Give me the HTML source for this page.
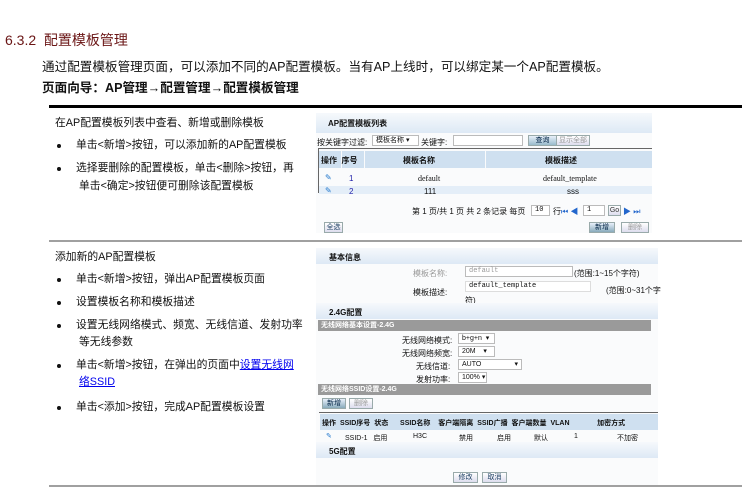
<!DOCTYPE html>
<html><head><meta charset="utf-8"><style>
*{margin:0;padding:0;box-sizing:border-box}
body{width:742px;height:492px;background:#fff;position:relative;overflow:hidden;font-family:"Liberation Sans","Noto Sans CJK SC",sans-serif;color:#111}
.a{position:absolute;white-space:nowrap}
.t{font-size:10.8px;line-height:13px}
.dot{position:absolute;width:4px;height:4px;border-radius:50%;background:#111}
.s{font-size:8px;font-family:"Liberation Sans","Noto Sans CJK SC",sans-serif}
.band{position:absolute;background:linear-gradient(#f6f9fc,#dde9f5)}
.btn{position:absolute;border:1px solid #9aa;background:linear-gradient(#fff,#dde);font-size:7px;text-align:center;line-height:9px;height:11px;color:#246}
.inp{position:absolute;border:1px solid #bbb;background:#fff;height:11px;font-size:7px;line-height:9px;padding-left:3px;font-family:"Liberation Mono",monospace}
.gray{position:absolute;background:#9a9a9a;color:#fff;font-size:7px;font-weight:bold;line-height:11px;padding-left:3px;height:11px}
</style></head><body>
<div class="a" style="left:5px;top:30px;font-size:14px;color:#6a1515">6.3.2&nbsp; 配置模板管理</div>
<div class="a" style="left:42px;top:56px;font-size:12.6px">通过配置模板管理页面，可以添加不同的AP配置模板。当有AP上线时，可以绑定某一个AP配置模板。</div>
<div class="a" style="left:42px;top:77px;font-size:12.6px;font-weight:bold">页面向导：AP管理→配置管理→配置模板管理</div>
<div class="a" style="left:49px;top:105px;width:693px;height:3px;background:#000"></div>
<div class="a" style="left:49px;top:240px;width:693px;height:2px;background:#a0a0a0"></div>
<div class="a" style="left:49px;top:485px;width:693px;height:2px;background:#a0a0a0"></div>

<div class="a t" style="left:55px;top:117px">在AP配置模板列表中查看、新增或删除模板</div>
<div class="dot" style="left:57px;top:144px"></div><div class="a t" style="left:76px;top:139px">单击&lt;新增&gt;按钮，可以添加新的AP配置模板</div>
<div class="dot" style="left:57px;top:167px"></div><div class="a t" style="left:76px;top:162px">选择要删除的配置模板，单击&lt;删除&gt;按钮，再</div>
<div class="a t" style="left:79px;top:180px">单击&lt;确定&gt;按钮便可删除该配置模板</div>

<div class="a t" style="left:55px;top:251px">添加新的AP配置模板</div>
<div class="dot" style="left:57px;top:278px"></div><div class="a t" style="left:76px;top:273px">单击&lt;新增&gt;按钮，弹出AP配置模板页面</div>
<div class="dot" style="left:57px;top:301px"></div><div class="a t" style="left:76px;top:296px">设置模板名称和模板描述</div>
<div class="dot" style="left:57px;top:324px"></div><div class="a t" style="left:76px;top:319px">设置无线网络模式、频宽、无线信道、发射功率</div>
<div class="a t" style="left:79px;top:336px">等无线参数</div>
<div class="dot" style="left:57px;top:364px"></div><div class="a t" style="left:76px;top:359px">单击&lt;新增&gt;按钮，在弹出的页面中<span style="color:#00e;text-decoration:underline">设置无线网</span></div>
<div class="a t" style="left:79px;top:376px;color:#00e;text-decoration:underline">络SSID</div>
<div class="dot" style="left:57px;top:406px"></div><div class="a t" style="left:76px;top:401px">单击&lt;添加&gt;按钮，完成AP配置模板设置</div>

<!-- shot 1 -->
<div class="band" style="left:316px;top:113px;width:336px;height:20px"></div>
<div class="a s" style="left:328px;top:118px;font-weight:bold">AP配置模板列表</div>
<div class="a" style="left:316px;top:133px;width:336px;height:100px;background:#fafbfc"></div>
<div class="a s" style="left:317px;top:137px">按关键字过滤:</div>
<div class="inp" style="left:372px;top:135px;width:47px;font-family:inherit">模板名称 ▾</div>
<div class="a s" style="left:421px;top:137px">关键字:</div>
<div class="inp" style="left:453px;top:135px;width:70px"></div>
<div class="btn" style="left:528px;top:135px;width:29px;background:linear-gradient(#e8f0fa,#9bc);color:#024">查询</div>
<div class="btn" style="left:556px;top:135px;width:34px;color:#999">显示全部</div>
<div class="a" style="left:318px;top:148px;width:334px;height:1px;background:#666"></div>
<div class="a" style="left:318px;top:149px;width:1px;height:44px;background:#666"></div>
<div class="a" style="left:319px;top:151px;width:22px;height:17px;background:#cfe0f0"></div>
<div class="a" style="left:342px;top:151px;width:22px;height:17px;background:#cfe0f0"></div>
<div class="a" style="left:365px;top:151px;width:120px;height:17px;background:#cfe0f0"></div>
<div class="a" style="left:486px;top:151px;width:166px;height:17px;background:#cfe0f0"></div>
<div class="a s" style="left:321px;top:155px;font-weight:bold">操作&nbsp; 序号</div>
<div class="a s" style="left:403px;top:155px;font-weight:bold">模板名称</div>
<div class="a s" style="left:545px;top:155px;font-weight:bold">模板描述</div>
<div class="a" style="left:319px;top:186px;width:333px;height:8px;background:#e4eef8"></div>
<div class="a s" style="left:325px;top:173px;color:#27c">✎</div><div class="a s" style="left:349px;top:174px;color:#22a">1</div>
<div class="a s" style="left:418px;top:174px;font-family:'Liberation Serif',serif">default</div>
<div class="a s" style="left:543px;top:174px;font-family:'Liberation Serif',serif">default_template</div>
<div class="a s" style="left:325px;top:186px;color:#27c">✎</div><div class="a s" style="left:349px;top:187px;color:#22a">2</div>
<div class="a s" style="left:424px;top:187px">111</div><div class="a s" style="left:567px;top:187px">sss</div>
<div class="a s" style="left:412px;top:206px">第 1 页/共 1 页 共 2 条记录 每页</div>
<div class="inp" style="left:531px;top:205px;width:19px">10</div>
<div class="a s" style="left:553px;top:206px">行<span style="color:#26c">⏮ ◀</span></div>
<div class="inp" style="left:583px;top:205px;width:22px">1</div>
<div class="btn" style="left:608px;top:205px;width:13px;color:#333">Go</div>
<div class="a s" style="left:623px;top:206px;color:#26c">▶ ⏭</div>
<div class="btn" style="left:324px;top:222px;width:19px">全选</div>
<div class="btn" style="left:589px;top:222px;width:26px;background:linear-gradient(#e8f0fa,#8ab);color:#024">新增</div>
<div class="btn" style="left:621px;top:222px;width:28px;color:#999">删除</div>

<!-- shot 2 -->
<div class="a" style="left:316px;top:248px;width:342px;height:237px;background:#fafbfc"></div>
<div class="band" style="left:316px;top:248px;width:342px;height:16px"></div>
<div class="a s" style="left:329px;top:252px;font-weight:bold">基本信息</div>
<div class="a s" style="left:413px;top:268px;color:#999">模板名称:</div>
<div class="inp" style="left:465px;top:266px;width:108px;color:#999">default</div>
<div class="a s" style="left:574px;top:268px">(范围:1~15个字符)</div>
<div class="a s" style="left:413px;top:287px">模板描述:</div>
<div class="inp" style="left:465px;top:281px;width:126px;border-color:#ddd">default_template</div>
<div class="a s" style="left:606px;top:285px">(范围:0~31个字</div>
<div class="a s" style="left:465px;top:295px">符)</div>
<div class="band" style="left:316px;top:303px;width:342px;height:16px"></div>
<div class="a s" style="left:329px;top:307px;font-weight:bold">2.4G配置</div>
<div class="gray" style="left:318px;top:320px;width:333px">无线网络基本设置-2.4G</div>
<div class="a s" style="left:402px;top:335px">无线网络模式:</div><div class="inp" style="left:458px;top:333px;width:37px;font-family:inherit">b+g+n&nbsp; ▾</div>
<div class="a s" style="left:402px;top:348px">无线网络频宽:</div><div class="inp" style="left:458px;top:346px;width:37px;font-family:inherit">20M&nbsp;&nbsp;&nbsp; ▾</div>
<div class="a s" style="left:416px;top:361px">无线信道:</div><div class="inp" style="left:458px;top:359px;width:64px;font-family:inherit">AUTO<span style="float:right;padding-right:3px">▾</span></div>
<div class="a s" style="left:416px;top:374px">发射功率:</div><div class="inp" style="left:458px;top:372px;width:29px;font-family:inherit">100% ▾</div>
<div class="gray" style="left:318px;top:384px;width:333px">无线网络SSID设置-2.4G</div>
<div class="btn" style="left:322px;top:398px;width:24px;background:linear-gradient(#e8f0fa,#8ab);color:#024">新增</div>
<div class="btn" style="left:349px;top:398px;width:24px;color:#999">删除</div>
<div class="a" style="left:319px;top:412px;width:339px;height:1px;background:#666"></div>
<div class="a" style="left:320px;top:414px;width:338px;height:16px;background:#cfe0f0"></div>
<div class="a s" style="left:322px;top:418px;font-weight:bold;font-size:7px;word-spacing:2px">操作 SSID序号 状态 &nbsp;&nbsp;SSID名称 &nbsp;客户端隔离 SSID广播 客户端数量 VLAN &nbsp;&nbsp;&nbsp;&nbsp;&nbsp;&nbsp;加密方式</div>
<div class="a s" style="left:326px;top:432px;color:#27c;font-size:7px">✎</div>
<div class="a s" style="left:345px;top:433px;font-size:7px">SSID-1&nbsp;&nbsp; 启用</div>
<div class="a s" style="left:413px;top:433px;font-size:7px">H3C</div>
<div class="a s" style="left:459px;top:433px;font-size:7px">禁用</div>
<div class="a s" style="left:497px;top:433px;font-size:7px">启用</div>
<div class="a s" style="left:534px;top:433px;font-size:7px">默认</div>
<div class="a s" style="left:574px;top:433px;font-size:7px">1</div>
<div class="a s" style="left:617px;top:433px;font-size:7px">不加密</div>
<div class="band" style="left:316px;top:442px;width:342px;height:16px"></div>
<div class="a s" style="left:329px;top:446px;font-weight:bold">5G配置</div>
<div class="btn" style="left:453px;top:472px;width:25px">修改</div>
<div class="btn" style="left:482px;top:472px;width:25px">取消</div>
</body></html>
